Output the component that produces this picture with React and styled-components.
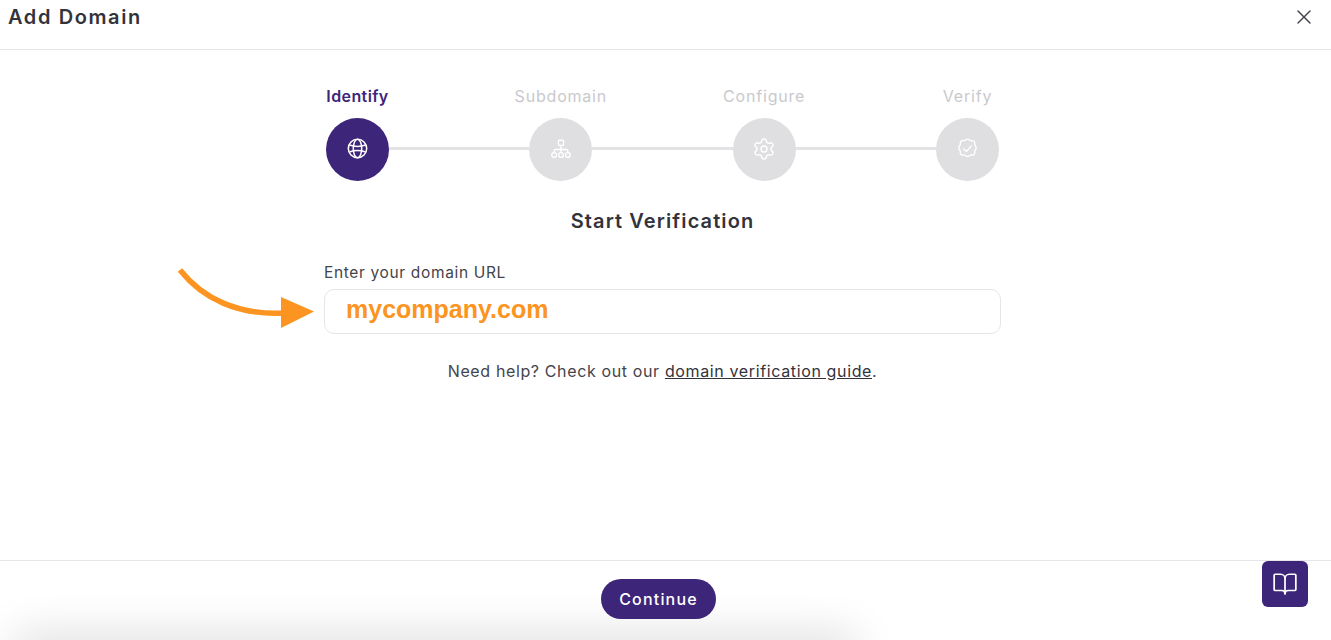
import styled, { createGlobalStyle } from "styled-components";
import { BookOpen, Settings, X } from "lucide-react";

const PURPLE = "#3d2579";
const INK = "#33333b";

const STEPS = [
    { label: "Identify", icon: <GlobeIcon />, active: true },
    { label: "Subdomain", icon: <TreeIcon /> },
    { label: "Configure", icon: <Settings size={24} strokeWidth={1.4} /> },
    { label: "Verify", icon: <BadgeIcon /> },
];

function GlobeIcon() {
    return (
        <svg width="23" height="23" viewBox="0 0 24 24" fill="none" stroke="currentColor" strokeWidth="1.6">
            <circle cx="12" cy="12" r="9.6" />
            <ellipse cx="12" cy="12" rx="4.4" ry="9.6" />
            <path d="M3.6 8.4c5 1.7 11.8 1.7 16.8 0M3.6 15.600c5-1.700 11.800-1.700 16.800 0" />
        </svg>
    );
}

function TreeIcon() {
    return (
        <svg width="22" height="22" viewBox="0 0 24 24" fill="none" stroke="currentColor" strokeWidth="1.5">
            <rect x="9.2" y="2.5" width="5.6" height="5.6" rx="1" />
            <path d="M12 8.100v4.400M4.500 16v-1.800a1.700 1.700 0 0 1 1.700-1.700h11.600a1.700 1.700 0 0 1 1.700 1.700V16M12 12.500V16" />
            <circle cx="4.5" cy="18.6" r="2.6" />
            <circle cx="12" cy="18.6" r="2.6" />
            <circle cx="19.5" cy="18.6" r="2.6" />
        </svg>
    );
}

function BadgeIcon() {
    return (
        <svg width="23" height="23" viewBox="0 0 24 24" fill="none" stroke="currentColor" strokeWidth="1.4" strokeLinecap="round" strokeLinejoin="round">
            <path d="M12 2.200c1.300 0 2.200 1.200 3.400 1.500 1.200.3 2.700-.2 3.500.7.900.8.400 2.300.7 3.500.3 1.200 1.500 2.100 1.500 3.400s-1.200 2.200-1.500 3.400c-.3 1.200.2 2.700-.7 3.500-.8.900-2.300.4-3.500.7-1.200.3-2.100 1.500-3.400 1.500s-2.200-1.200-3.400-1.500c-1.200-.3-2.700.2-3.500-.7-.9-.8-.4-2.300-.7-3.500-.3-1.200-1.500-2.100-1.500-3.400s1.200-2.200 1.500-3.400c.3-1.200-.2-2.700.7-3.500.8-.9 2.300-.4 3.500-.7 1.200-.3 2.100-1.500 3.400-1.500z" />
            <path d="M8 12.300l2.800 2.800 5.200-5.800" />
        </svg>
    );
}

export default function App() {
    return (
        <Page>
            <GlobalStyle />
            <Header>
                <Title>Add Domain</Title>
                <CloseButton><X size={24} strokeWidth={1.5} /></CloseButton>
            </Header>

            <Main>
                <Stepper>
                    {STEPS.map((step, i) => (
                        <StepGroup key={step.label} $last={i === STEPS.length - 1}>
                            <Step>
                                <StepLabel $active={step.active}>{step.label}</StepLabel>
                                <StepCircle $active={step.active}>{step.icon}</StepCircle>
                            </Step>
                            {i < STEPS.length - 1 && <Connector />}
                        </StepGroup>
                    ))}
                </Stepper>

                <Heading>Start Verification</Heading>

                <Field>
                    <FieldLabel>Enter your domain URL</FieldLabel>
                    <InputBox>mycompany.com</InputBox>
                    <Arrow width="140" height="68" viewBox="0 0 140 68">
                        <path d="M2 7C25 36 60 52 105 50" fill="none" stroke="#fb9420" strokeWidth="5.500" />
                        <path d="M103 34L136 48.500L103 65Z" fill="#fb9420" />
                    </Arrow>
                </Field>

                <Help>
                    Need help? Check out our <HelpLink>domain verification guide</HelpLink>.
                </Help>
            </Main>

            <Footer>
                <ContinueButton>Continue</ContinueButton>
                <GuideButton><BookOpen size={26} strokeWidth={1.6} /></GuideButton>
                <BottomShadow />
            </Footer>
        </Page>
    );
}

const GlobalStyle = createGlobalStyle`
    html, body {
        margin: 0;
        background: #fff;
    }

    body {
        font-family: "Inter", "Liberation Sans", sans-serif;
        color: ${INK};
    }
`;

const Page = styled.div`
    width: 1331px;
    height: 640px;
    display: flex;
    flex-direction: column;
    overflow: hidden;
`;

const Header = styled.header`
    height: 50px;
    box-sizing: border-box;
    padding: 0 15px 15px 8px;
    display: flex;
    align-items: center;
    justify-content: space-between;
    border-bottom: 1px solid #e6e6e8;
    flex-shrink: 0;
`;

const Title = styled.h1`
    margin: 0;
    font-size: 20px;
    font-weight: 600;
    letter-spacing: 1.6px;
    color: ${INK};
`;

const CloseButton = styled.button`
    padding: 0;
    border: 0;
    background: none;
    display: flex;
    color: #45454d;
`;

const Main = styled.main`
    flex: 1;
    width: 677px;
    margin-left: 324px;
    display: flex;
    flex-direction: column;
    align-items: stretch;
    padding-top: 36px;
    box-sizing: border-box;
`;

const Stepper = styled.div`
    display: flex;
    margin: 0 2px;
`;

const StepGroup = styled.div`
    display: flex;
    flex: ${props => (props.$last ? "0 0 auto" : "1")};
`;

const Step = styled.div`
    width: 63px;
    display: flex;
    flex-direction: column;
    align-items: center;
    gap: 12px;
`;

const StepLabel = styled.span`
    font-size: 16px;
    line-height: 20px;
    white-space: nowrap;
    letter-spacing: ${props => (props.$active ? "0.4px" : "0.8px")};
    font-weight: ${props => (props.$active ? 600 : 400)};
    color: ${props => (props.$active ? PURPLE : "#c9c9cd")};
`;

const StepCircle = styled.div`
    width: 63px;
    height: 63px;
    box-sizing: border-box;
    padding-bottom: 2px;
    border-radius: 50%;
    display: flex;
    align-items: center;
    justify-content: center;
    background: ${props => (props.$active ? PURPLE : "#dfdfe1")};
    color: #fff;
`;

const Connector = styled.div`
    flex: 1;
    height: 3px;
    align-self: flex-end;
    margin-bottom: 31px;
    background: #e3e3e5;
`;

const Heading = styled.h2`
    margin: 27px 0 0;
    font-size: 20px;
    line-height: 26px;
    font-weight: 600;
    letter-spacing: 1.1px;
    text-align: center;
    color: ${INK};
`;

const Field = styled.div`
    position: relative;
    margin-top: 29px;
    display: flex;
    flex-direction: column;
    gap: 6px;
`;

const FieldLabel = styled.label`
    font-size: 15.500px;
    line-height: 20px;
    letter-spacing: 0.65px;
    color: #44444c;
`;

const InputBox = styled.div`
    height: 45px;
    box-sizing: border-box;
    padding: 0 0 5px 21px;
    display: flex;
    align-items: center;
    border: 1px solid #e6e6e8;
    border-radius: 10px;
    font-family: "Liberation Sans", Arial, sans-serif;
    font-size: 25px;
    font-weight: 700;
    color: #fb9420;
`;

const Arrow = styled.svg`
    position: absolute;
    left: -146px;
    top: 0;
`;

const Help = styled.p`
    margin: 27px 0 0;
    font-size: 16px;
    line-height: 20px;
    letter-spacing: 0.63px;
    text-align: center;
    color: #44444c;
`;

const HelpLink = styled.a`
    text-decoration: underline;
    color: ${INK};
`;

const Footer = styled.footer`
    position: relative;
    height: 80px;
    flex-shrink: 0;
    border-top: 1px solid #e6e6e8;
    box-sizing: border-box;
    display: flex;
    justify-content: flex-start;
    padding: 18px 0 0 601px;
`;

const ContinueButton = styled.button`
    position: relative;
    z-index: 1;
    width: 115px;
    height: 40px;
    border: 0;
    border-radius: 20px;
    background: ${PURPLE};
    color: #fff;
    font-family: inherit;
    font-size: 16px;
    font-weight: 500;
    letter-spacing: 1.2px;
`;

const GuideButton = styled.button`
    position: absolute;
    z-index: 1;
    top: 0;
    left: 1262px;
    width: 46px;
    height: 46px;
    padding: 0;
    border: 0;
    border-radius: 6px;
    background: ${PURPLE};
    color: #fff;
    display: flex;
    align-items: center;
    justify-content: center;
`;

const BottomShadow = styled.div`
    position: absolute;
    left: 20px;
    bottom: -22px;
    width: 830px;
    height: 22px;
    box-shadow: 0 0 44px 6px rgba(0, 0, 0, 0.14);
`;
